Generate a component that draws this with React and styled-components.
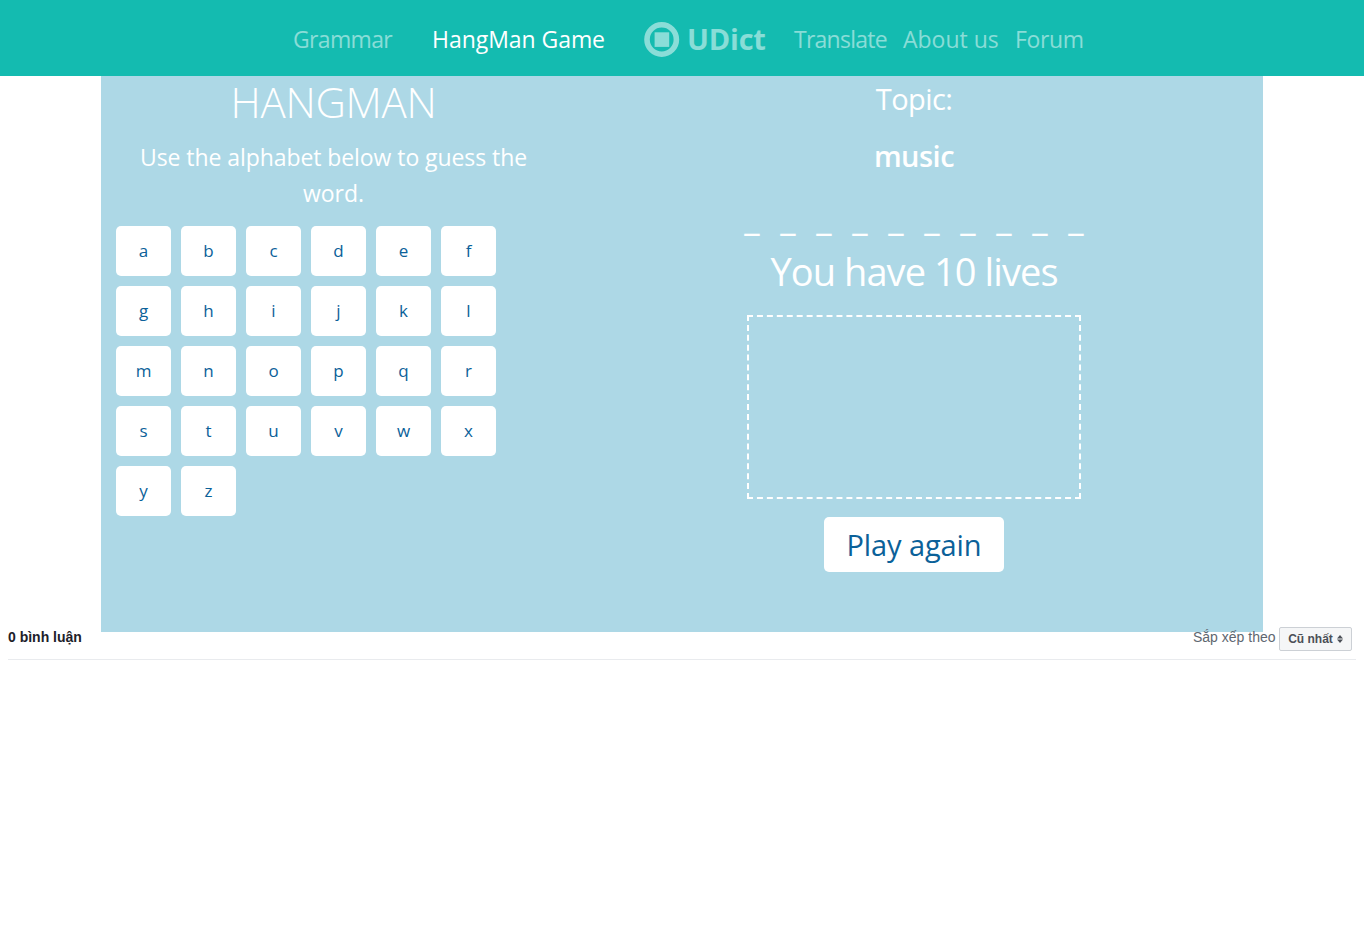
import React from "react";
import styled, { createGlobalStyle } from "styled-components";

const GlobalStyle = createGlobalStyle`
  * { box-sizing: border-box; }
  body {
    margin: 0;
    background: #fff;
    font-family: "Open Sans", sans-serif;
  }
`;

const NavBar = styled.nav`
  display: grid;
  grid-template-columns: 139px 212px 150px 109px 112px auto;
  align-items: center;
  height: 76px;
  padding: 2px 0 0 293px;
  background: #14bbb0;
`;

const NavLink = styled.a`
  font-size: 23px;
  line-height: 36px;
  white-space: nowrap;
  letter-spacing: ${(p) => p.$track || 0}px;
  color: ${(p) => (p.$active ? "#fff" : "rgba(255, 255, 255, 0.5)")};
`;

const Brand = styled.a`
  display: flex;
  align-items: center;
  gap: 7px;
  font-size: 29px;
  font-weight: 700;
  line-height: 44px;
  letter-spacing: -0.2px;
  color: rgba(255, 255, 255, 0.5);
`;

const BrandIcon = styled.svg`
  display: block;
  width: 36px;
  height: 36px;
  margin-top: 2px;
`;

const Board = styled.main`
  display: grid;
  grid-template-columns: 465px 696px;
  width: 1162px;
  height: 556px;
  margin: 0 auto;
  background: #add8e6;
  color: #fff;
`;

const GuessPanel = styled.section`
  padding: 0 15px;
`;

const Title = styled.h1`
  margin: 0 0 12px;
  font-size: 42px;
  font-weight: 300;
  line-height: 51px;
  letter-spacing: -0.3px;
  text-align: center;
`;

const Hint = styled.p`
  margin: 0 0 15px;
  padding: 0 20px;
  font-size: 23px;
  line-height: 36px;
  letter-spacing: -0.07px;
  text-align: center;
`;

const Keyboard = styled.div`
  display: grid;
  grid-template-columns: repeat(6, 55px);
  gap: 10px;
`;

const Key = styled.button`
  height: 50px;
  padding: 0 0 1px;
  border: 0;
  border-radius: 5px;
  background: #fff;
  color: #0b6199;
  font-family: inherit;
  font-size: 17px;
  line-height: 49px;
`;

const StatusPanel = styled.section`
  display: flex;
  flex-direction: column;
  align-items: center;
`;

const Topic = styled.p`
  margin: 0 0 12px;
  font-size: 29px;
  line-height: 45px;
  letter-spacing: -0.6px;
`;

const TopicName = styled.p`
  margin: 0 0 16px;
  font-size: 29px;
  font-weight: 600;
  line-height: 45px;
  letter-spacing: -0.5px;
`;

const Word = styled.div`
  display: flex;
  gap: 20px;
  height: 45px;
  margin-bottom: 4px;
  font-size: 36px;
  font-weight: 600;
  line-height: 45px;
`;

const Blank = styled.span`
  display: flex;
  justify-content: center;
  width: 16px;
`;

const Lives = styled.p`
  margin: 0 0 16px;
  font-size: 38px;
  line-height: 56px;
  letter-spacing: -0.92px;
`;

const Gallows = styled.div`
  width: 334px;
  height: 184px;
  margin-bottom: 18px;
  border: 2px dashed #fff;
`;

const PlayAgain = styled(Key)`
  width: 180px;
  height: 55px;
  padding: 0;
  font-size: 29px;
  line-height: 55px;
  letter-spacing: -0.1px;
`;

const Comments = styled.footer`
  display: flex;
  align-items: flex-start;
  justify-content: space-between;
  position: relative;
  height: 33px;
  margin: -5px 8px 0;
  padding-right: 4px;
  border-bottom: 1px solid #e9ebee;
  font-family: "Liberation Sans", sans-serif;
  font-size: 14px;
  line-height: 20px;
`;

const Count = styled.strong`
  color: #1d2129;
`;

const Sorting = styled.div`
  display: flex;
  gap: 3.5px;
  color: #606770;
`;

const SortButton = styled.button`
  display: flex;
  align-items: center;
  justify-content: center;
  gap: 4px;
  width: 73px;
  height: 24px;
  padding: 0;
  border: 1px solid #ccd0d5;
  border-radius: 2px;
  background: #f5f6f7;
  color: #4b4f56;
  font-family: inherit;
  font-size: 12px;
  font-weight: 700;
  line-height: 22px;
`;

const SortIcon = styled.svg`
  display: block;
  width: 6px;
  height: 8px;
`;

export default function App() {
  return (
    <>
      <GlobalStyle />
      <NavBar>
        <NavLink $track={-0.65}>Grammar</NavLink>
        <NavLink $active $track={-0.05}>HangMan Game</NavLink>
        <Brand>
          <BrandIcon viewBox="0 0 36 36" fill="none">
            <circle cx="17.7" cy="17.5" r="14.7" stroke="currentColor" strokeWidth="5.6" />
            <rect x="10.6" y="10.3" width="14.6" height="14.6" fill="currentColor" />
          </BrandIcon>
          UDict
        </Brand>
        <NavLink $track={-0.75}>Translate</NavLink>
        <NavLink>About us</NavLink>
        <NavLink $track={-0.35}>Forum</NavLink>
      </NavBar>
      <Board>
        <GuessPanel>
          <Title>HANGMAN</Title>
          <Hint>Use the alphabet below to guess the word.</Hint>
          <Keyboard>
            {[..."abcdefghijklmnopqrstuvwxyz"].map((letter) => (
              <Key key={letter}>{letter}</Key>
            ))}
          </Keyboard>
        </GuessPanel>
        <StatusPanel>
          <Topic>Topic:</Topic>
          <TopicName>music</TopicName>
          <Word>
            {Array.from({ length: 10 }, (_, i) => (
              <Blank key={i}>_</Blank>
            ))}
          </Word>
          <Lives>You have 10 lives</Lives>
          <Gallows />
          <PlayAgain>Play again</PlayAgain>
        </StatusPanel>
      </Board>
      <Comments>
        <Count>0 bình luận</Count>
        <Sorting>
          Sắp xếp theo
          <SortButton>
            Cũ nhất
            <SortIcon viewBox="0 0 6 8" fill="currentColor">
              <path d="M0 3.4L3 0L6 3.4ZM0 4.6H6L3 8Z" />
            </SortIcon>
          </SortButton>
        </Sorting>
      </Comments>
    </>
  );
}
